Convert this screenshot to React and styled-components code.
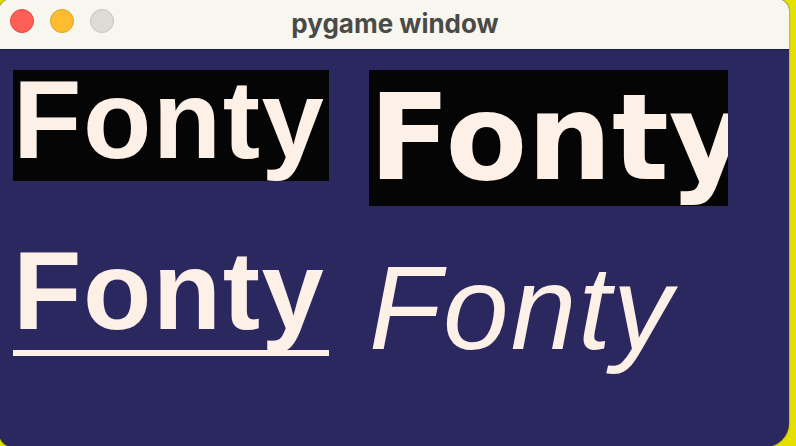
import React from "react"
import styled, { createGlobalStyle } from "styled-components"

const GlobalStyle = createGlobalStyle`
  html, body {
    margin: 0;
    padding: 0;
    background: #e6e000;
    overflow: hidden;
  }
`

const Window = styled.div`
  width: 790px;
  height: 448px;
  margin-top: -1px;
  margin-left: -1px;
  border-radius: 12px 12px 24px 14px;
  overflow: hidden;
  display: flex;
  flex-direction: column;
  background: #2a285e;
  box-shadow: 0 0 2px rgba(0, 0, 0, 0.5);
`

const TitleBar = styled.div`
  position: relative;
  height: 50px;
  flex-shrink: 0;
  display: flex;
  align-items: center;
  justify-content: center;
  background: #f8f7ef;
  border-bottom: 1px solid #1c1b45;
`

const Lights = styled.div`
  position: absolute;
  left: 11px;
  top: 10px;
  display: flex;
  gap: 16px;
`

const Light = styled.span`
  width: 22px;
  height: 22px;
  border-radius: 50%;
  background: ${(p) => p.$fill};
  border: 1px solid ${(p) => p.$edge};
`

const Title = styled.h1`
  margin: 0 0 2px 2px;
  font-family: Inter, "Liberation Sans", sans-serif;
  font-weight: 700;
  font-size: 26px;
  color: #4a4a48;
`

const Canvas = styled.div`
  flex: 1;
  display: grid;
  grid-template-columns: 356px auto;
  grid-template-rows: 171px auto;
  align-items: start;
  padding: 20px 0 0 14px;
`

const Fonty = styled.div`
  width: ${(p) => p.$w}px;
  height: ${(p) => p.$h}px;
  overflow: hidden;
  white-space: nowrap;
  color: #fdf0e6;
  background: ${(p) => p.$bg || "transparent"};
  font-family: ${(p) => p.$font};
  font-size: ${(p) => p.$size}px;
  font-weight: ${(p) => (p.$bold ? 700 : 400)};
  font-style: ${(p) => (p.$italic ? "italic" : "normal")};
  line-height: ${(p) => p.$lh}px;
  letter-spacing: ${(p) => p.$ls || 0}px;
  padding-left: ${(p) => p.$pad || 0}px;
  box-sizing: border-box;
  border-bottom: ${(p) => (p.$underline ? "6px solid #fdf0e6" : "none")};
`

const sans = `"Liberation Sans", Arial, sans-serif`
const dejavu = `"DejaVu Sans", sans-serif`

export default function App() {
  return (
    <>
      <GlobalStyle />
      <Window>
        <TitleBar>
          <Lights>
            <Light $fill="#ff5f57" $edge="#e2463f" />
            <Light $fill="#febc2e" $edge="#e0a027" />
            <Light $fill="#dedcd5" $edge="#c6c4bd" />
          </Lights>
          <Title>pygame window</Title>
        </TitleBar>
        <Canvas>
          <Fonty $bg="#050505" $font={sans} $bold $size={112} $lh={99} $ls={1.5} $w={316} $h={111}>
            Fonty
          </Fonty>
          <Fonty $bg="#050505" $font={dejavu} $bold $size={119} $lh={137} $w={359} $h={136}>
            Fonty
          </Fonty>
          <Fonty $font={sans} $bold $size={112} $lh={99} $ls={1.5} $w={316} $h={115} $underline>
            Fonty
          </Fonty>
          <Fonty $font={sans} $italic $size={118} $lh={134} $ls={2} $w={360} $h={150}>
            Fonty
          </Fonty>
        </Canvas>
      </Window>
    </>
  )
}
